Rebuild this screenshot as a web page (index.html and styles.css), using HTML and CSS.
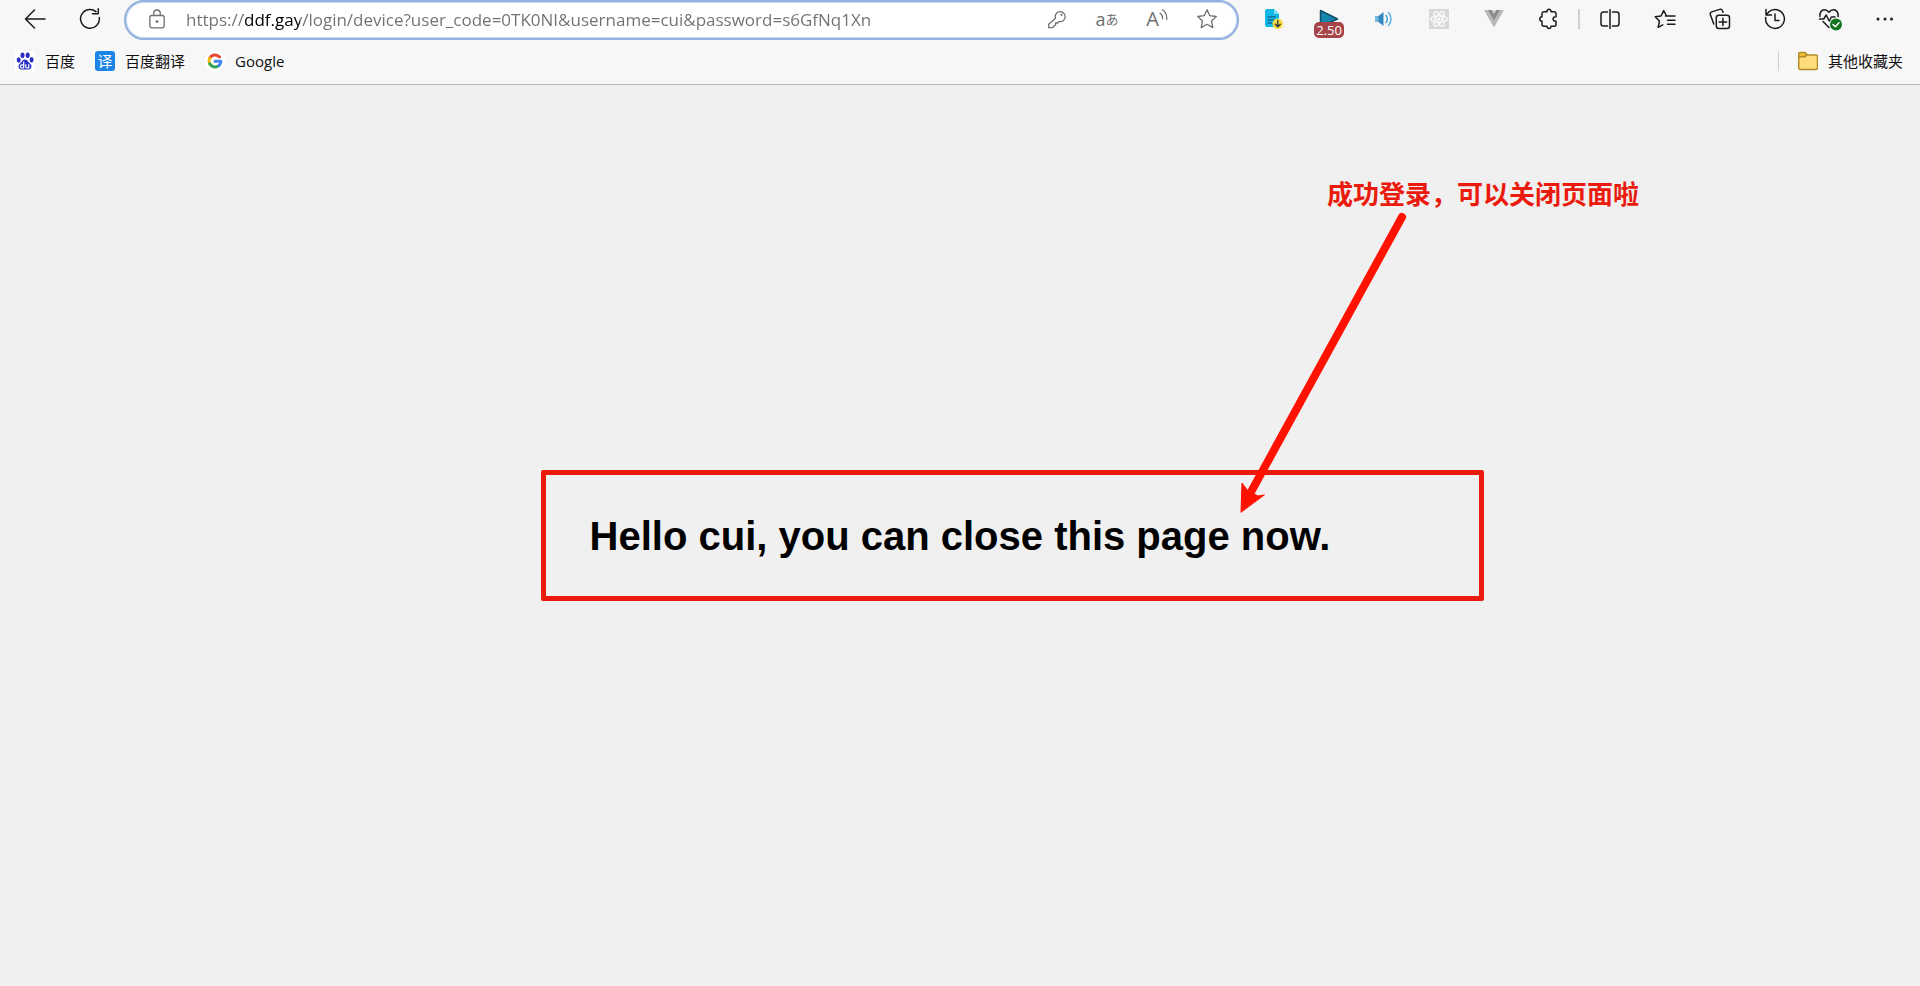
FILE: index.html
```html
<!DOCTYPE html>
<html lang="zh-CN">
<head>
<meta charset="utf-8">
<title>ddf.gay</title>
<link rel="stylesheet" href="styles.css">
</head>
<body>
<header class="browser">
  <div class="toolbar">
    <nav class="group" aria-label="导航">
      <button class="tool" aria-label="返回"><svg width="22" height="22" viewBox="0 0 22 22"><path d="M21 11H2M10.500 2 1.500 11l9 9"/></svg></button>
      <button class="tool" aria-label="刷新"><svg width="22" height="22" viewBox="0 0 22 22"><path d="M20.300 9.500A9.400 9.400 0 1 1 17 3.600M13.500 5.700h5.800V.8"/></svg></button>
    </nav>
    <div class="address">
      <button class="site" aria-label="网站信息"><svg width="18" height="20" viewBox="0 0 18 20"><rect x="1.800" y="6.500" width="14.400" height="12.300" rx="2"/><path d="M5.700 6.500V4.300a3.300 3.300 0 0 1 6.600 0v2.200"/><circle class="dot" cx="9" cy="12.600" r="1.400"/></svg></button>
      <input class="url" type="text" aria-label="地址栏" spellcheck="false" value="https://ddf.gay/login/device?user_code=0TK0NI&amp;username=cui&amp;password=s6GfNq1Xn">
      <button class="inner" aria-label="密码"><svg width="20" height="20" viewBox="0 0 20 20"><path d="M8.200 8.100a5 5 0 1 1 4 4.500L10.500 14H8.600v1.800L5.500 18.700H1.700v-3.400l6.800-6.100z"/><circle class="dot" cx="14.500" cy="5.800" r="1.100"/></svg></button>
      <button class="inner glyphs" aria-label="翻译">a<span class="kana">あ</span></button>
      <button class="inner glyphs read" aria-label="朗读此页">A<svg width="9" height="14" viewBox="0 0 9 14"><path d="M1 4.200c2 1.200 2.700 3.200 2.600 5.600M3.500.8c3 2 4.500 5.500 4.200 9.700"/></svg></button>
      <button class="inner" aria-label="收藏"><svg width="22" height="22" viewBox="0 0 22 22"><path d="m11 1.700 2.800 6 6.500.8-4.800 4.500 1.300 6.600-5.800-3.300-5.800 3.300L6.500 13 1.700 8.500l6.500-.8z"/></svg></button>
    </div>
    <div class="group">
      <button class="tool" aria-label="文档下载"><svg class="flat" width="20" height="22" viewBox="0 0 20 22"><path fill="#10b8e8" d="M3 1h7l5 5v13H3a2 2 0 0 1-2-2V3a2 2 0 0 1 2-2z"/><path fill="#7bdcf5" d="M10 1v5h5z"/><path stroke="#126b93" stroke-width="1.300" d="M4 9h7M4 12h6M4 15h4"/><circle cx="13.800" cy="15.800" r="5.300" fill="#f3dc45"/><path stroke="#333" stroke-width="1.300" d="M13.800 12.500v6M11.300 16.200l2.500 2.500 2.500-2.500"/></svg></button>
      <button class="tool speed" aria-label="播放速度 2.50"><svg class="flat" width="20" height="22" viewBox="0 0 20 22"><path fill="#1685af" stroke="#124e69" d="M1.500 2.500v16L18.500 11z"/></svg><span class="badge">2.50</span></button>
      <button class="tool" aria-label="音量"><svg class="flat" width="20" height="20" viewBox="0 0 20 20"><path fill="#3388c4" d="M1 7h3.500L9.500 3v14l-5-4H1z"/><path fill="#79b7dc" d="M4.500 7v6H1V7z"/><path stroke="#3f9edb" stroke-width="1.400" d="M12 6.500c1.600 2 1.600 5 0 7"/><path stroke="#62b4e5" stroke-width="1.600" d="M14.500 3.500c3.300 3.500 3.300 9.500 0 13"/></svg></button>
      <button class="tool" aria-label="React"><svg class="flat" width="20" height="20" viewBox="0 0 20 20"><path fill="#d8d8d8" d="M0 0h20v20H0z"/><g stroke="#f8f8f8"><ellipse cx="10" cy="10" rx="8.300" ry="3.300"/><ellipse cx="10" cy="10" rx="8.300" ry="3.300" transform="rotate(60 10 10)"/><ellipse cx="10" cy="10" rx="8.300" ry="3.300" transform="rotate(120 10 10)"/></g><circle cx="10" cy="10" r="1.500" fill="#fff"/></svg></button>
      <button class="tool" aria-label="Vue"><svg class="flat" width="20" height="18" viewBox="0 0 20 18"><path fill="#b9b9b9" d="M0 0h20L10 17.500z"/><path fill="#8c8c8c" d="M4 0h12l-6 10.500z"/><path fill="#d5d5d5" d="M7.700 0h4.600L10 4z"/></svg></button>
      <button class="tool" aria-label="扩展"><svg width="20" height="22" viewBox="0 0 20 22"><path d="M5 3.700h3c-.4-3.200 4.400-3.200 4 0h3a2 2 0 0 1 2 2v3c-3.900-.3-3.900 4.800 0 4.500v3a2 2 0 0 1-2 2h-3c.4 3-4.400 3-4 0H5a2 2 0 0 1-2-2v-3c-3-.3-3-4.200 0-4.500v-3a2 2 0 0 1 2-2z"/></svg></button>
      <span class="rule"></span>
      <button class="tool" aria-label="分屏"><svg width="20" height="20" viewBox="0 0 20 20"><path d="M7.500 3H3.300A2.300 2.300 0 0 0 1 5.300v9.400A2.300 2.300 0 0 0 3.300 17h4.200M12.500 3h4.200A2.300 2.300 0 0 1 19 5.300v9.400a2.300 2.300 0 0 1-2.300 2.300h-4.200M10 .5v19"/></svg></button>
      <button class="tool" aria-label="收藏夹"><svg width="22" height="20" viewBox="0 0 22 20"><path d="m12.500 7-2.800-5.500L7 7l-5.800.8 4.200 4.200-1.200 6.300 4.600-2.400M11.500 7H21M13.500 11.200H21M13.500 15.300H21"/></svg></button>
      <button class="tool" aria-label="集锦"><svg width="22" height="22" viewBox="0 0 22 22"><rect x="7.300" y="7.300" width="13.200" height="13.200" rx="2.500"/><path d="M13.900 10.200v7.400M10.200 13.900h7.400M4.800 16 1.400 6.700c-.5-1.300 0-2.300 1.300-2.800l8-2.500c1.300-.4 2.300 0 2.700 1.300l.6 1.600"/></svg></button>
      <button class="tool" aria-label="历史记录"><svg width="22" height="22" viewBox="0 0 22 22"><path d="M1.700 9.500a9.400 9.400 0 1 0 3-5.500M2 1.500V7h5.500M2.300 6.700 5.200 3.600M11 6v6.500h4"/></svg></button>
      <button class="tool" aria-label="浏览器概要"><svg width="24" height="24" viewBox="0 0 24 24"><path d="M2 9.500C1.300 6 3.500 2.700 6.500 2.700c2 0 3.300 1 4.500 2.600 1.200-1.600 2.500-2.600 4.500-2.600 3 0 5.300 3.300 4.500 6.800M1.500 12h4.200l2.500-4 3 6 2.200-4H17M5 14.500l6 6"/><circle cx="18" cy="17.500" r="6" fill="#13751d" stroke="none"/><path stroke="#fff" d="m15 17.500 2.300 2.200 3.700-4"/></svg></button>
      <button class="tool" aria-label="设置及其他"><svg width="18" height="18" viewBox="0 0 18 18"><g class="dots"><circle cx="2" cy="9" r="1.500"/><circle cx="9" cy="9" r="1.500"/><circle cx="15.500" cy="9" r="1.500"/></g></svg></button>
    </div>
  </div>
  <nav class="bookmarks" aria-label="收藏夹栏">
    <a class="bookmark" href="#"><svg class="flat" width="20" height="20" viewBox="0 0 20 20"><path fill="#fff" d="M0 0h20v20H0z"/><g fill="#2a2fc4"><ellipse cx="3.700" cy="9" rx="2" ry="2.700"/><ellipse cx="7.500" cy="4.200" rx="2" ry="2.800"/><ellipse cx="12.700" cy="4.200" rx="2" ry="2.800"/><ellipse cx="16.600" cy="8.800" rx="2" ry="2.700"/><path d="M10 8.500c2 0 2.700 1.700 4 3 2 1.700 3 3 2.300 5-.9 2.700-3.700 2-6.300 2s-5.400.7-6.300-2c-.7-2 .3-3.300 2.300-5 1.300-1.300 2-3 4-3z"/></g><path stroke="#fff" stroke-width="1.200" d="M8.700 11v6H7a1.500 1.500 0 0 1 0-3.200h1.500M10.800 13.500v2.200c0 1.700 3 1.700 3 0v-2.200V17"/></svg>百度</a>
    <a class="bookmark" href="#"><span class="tile">译</span>百度翻译</a>
    <a class="bookmark" href="#"><svg class="flat" width="20" height="20" viewBox="0 0 20 20"><circle cx="10" cy="10" r="10" fill="#fff"/><g stroke-width="3"><path stroke="#e84436" d="M4.700 7.200A6 6 0 0 1 14.500 6"/><path stroke="#f8bb16" d="M4.700 12.800a6 6 0 0 1 0-5.600"/><path stroke="#34a353" d="M4.700 12.800a6 6 0 0 0 9.300 1.700"/><path stroke="#4285f4" d="M14 14.500a6 6 0 0 0 1.900-4.200H10"/></g></svg>Google</a>
    <div class="others">
      <a class="bookmark" href="#"><svg class="flat" width="20" height="20" viewBox="0 0 20 20"><path fill="#ffdc7c" stroke="#b28b24" d="M.7 4a2 2 0 0 1 2-2H7l2 2h8.500a2 2 0 0 1 2 2v10.500a2 2 0 0 1-2 2H2.700a2 2 0 0 1-2-2z"/><path fill="#f0bd32" stroke="#b28b24" d="M.7 5.700V3.500C.7 2 1.500 1.400 2.700 1.400h4L9 3.500 7 5.700z"/></svg>其他收藏夹</a>
    </div>
  </nav>
</header>
<main class="page">
  <h1 class="message">Hello cui, you can close this page now.</h1>
  <div class="frame"></div>
  <p class="note">成功登录，可以关闭页面啦</p>
  <svg class="arrow" width="170" height="304" viewBox="0 0 170 304"><path class="shaft" d="M165 5 14 280"/><path class="head" d="M4 300 5 271l6 8 10 5 6-1z"/></svg>
</main>
</body>
</html>
```
FILE: styles.css
```css
* {
  box-sizing: border-box;
}

body {
  margin: 0;
  min-height: 100vh;
  display: flex;
  flex-direction: column;
  background: #f0f0f0;
  font-family: "Open Sans", "Noto Sans CJK SC", sans-serif;
}

button {
  display: flex;
  align-items: center;
  justify-content: center;
  padding: 0;
  border: 0;
  background: none;
  color: inherit;
  font: inherit;
}

svg {
  flex: none;
  fill: none;
  stroke: #1b1b1b;
  stroke-width: 1.5;
  stroke-linecap: round;
  stroke-linejoin: round;
}

.flat {
  stroke: none;
}

.browser {
  background: #f7f7f7;
  border-bottom: 1px solid #b8b8b8;
}

.toolbar {
  display: flex;
  align-items: center;
  gap: 7px;
  height: 40px;
  padding: 0 8px 0 7px;
}

.group {
  display: flex;
  align-items: center;
}

.tool {
  position: relative;
  width: 55px;
  height: 38px;
}

.toolbar > .group {
  align-self: flex-start;
}

.rule {
  width: 2px;
  height: 20px;
  margin: 0 2px;
  background: #cfcfcf;
}

.dots {
  fill: #1b1b1b;
  stroke: none;
}

.badge {
  position: absolute;
  top: 22px;
  left: 13px;
  width: 30px;
  border-radius: 5px;
  background: #a64447;
  color: #fff;
  font-size: 13px;
  line-height: 16px;
}

.address {
  flex: 1;
  display: flex;
  align-items: center;
  height: 40px;
  padding: 0 5px 2px 8px;
  border: 2px solid #93afe0;
  border-radius: 20px;
  background: #fff;
  box-shadow: inset 0 0 0 1px #c5dbf2;
  color: #707070;
}

.address svg {
  stroke: #707070;
  stroke-width: 1.3;
}

.address .dot {
  fill: #707070;
  stroke: none;
}

.site {
  width: 46px;
  height: 34px;
}

.url {
  flex: 1;
  min-width: 0;
  height: 34px;
  margin-left: 6px;
  padding: 0;
  border: 0;
  outline: 0;
  background: linear-gradient(90deg, #707070 57px, #000 57px, #000 114px, #707070 114px);
  background-clip: text;
  -webkit-background-clip: text;
  color: transparent;
  font-family: "Open Sans", sans-serif;
  font-size: 17px;
}

.inner {
  width: 50px;
  height: 34px;
}

.glyphs {
  font-size: 18px;
  line-height: 20px;
}

.kana {
  font-size: 13px;
}

.read {
  font-size: 20px;
}

.read svg {
  align-self: flex-start;
  margin-top: 7px;
}

.bookmarks {
  display: flex;
  align-items: center;
  gap: 20px;
  height: 44px;
  padding: 0 17px 2px 15px;
}

.bookmark {
  display: flex;
  align-items: center;
  gap: 10px;
  color: #111;
  font-size: 15px;
  line-height: 20px;
  text-decoration: none;
}

.tile {
  width: 20px;
  border-radius: 3px;
  background: #1b84e7;
  color: #fff;
  text-align: center;
}

.others {
  margin-left: auto;
  padding-left: 19px;
  border-left: 1px solid #cfcfcf;
}

.page {
  position: relative;
  flex: 1;
  display: flex;
  align-items: center;
  justify-content: center;
}

.message {
  margin: 0;
  color: #000;
  font-family: "Liberation Sans", Arial, sans-serif;
  font-size: 40px;
  line-height: 48px;
}

.frame {
  position: absolute;
  top: calc(50% - 66px);
  left: calc(50% - 419px);
  width: 943px;
  height: 131px;
  border: 5px solid #ea1b0d;
  border-radius: 2px;
}

.note {
  position: absolute;
  top: calc(50% - 361px);
  left: calc(50% + 367px);
  margin: 0;
  color: #ea1b0d;
  font-family: "Noto Sans CJK SC", sans-serif;
  font-size: 26px;
  font-weight: 700;
  line-height: 36px;
}

.arrow {
  position: absolute;
  top: calc(50% - 324px);
  left: calc(50% + 277px);
}

.shaft {
  stroke: #ff1200;
  stroke-width: 8;
}

.head {
  fill: #ff1200;
  stroke: #ff1200;
  stroke-width: 1;
}
```
